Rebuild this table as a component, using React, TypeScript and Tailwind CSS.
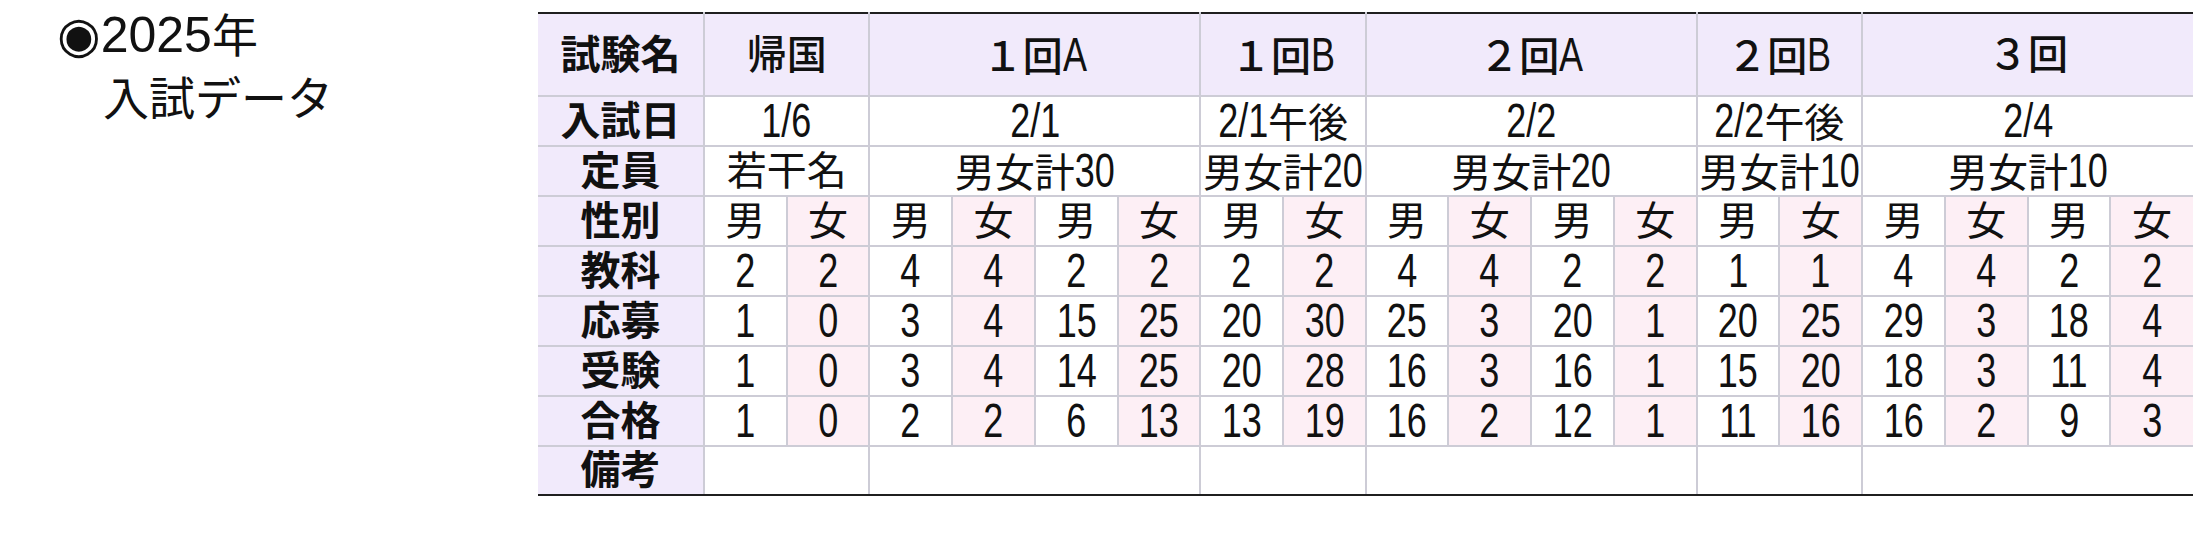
import React from "react";

const groups = [
  { name: "帰国", date: "1/6", cap: "若干名", span: 2 },
  { name: "１回A", date: "2/1", cap: "男女計30", span: 4 },
  { name: "１回B", date: "2/1午後", cap: "男女計20", span: 2 },
  { name: "２回A", date: "2/2", cap: "男女計20", span: 4 },
  { name: "２回B", date: "2/2午後", cap: "男女計10", span: 2 },
  { name: "３回", date: "2/4", cap: "男女計10", span: 4 },
];

const rows: { label: string; values: number[] }[] = [
  { label: "教科", values: [2, 2, 4, 4, 2, 2, 2, 2, 4, 4, 2, 2, 1, 1, 4, 4, 2, 2] },
  { label: "応募", values: [1, 0, 3, 4, 15, 25, 20, 30, 25, 3, 20, 1, 20, 25, 29, 3, 18, 4] },
  { label: "受験", values: [1, 0, 3, 4, 14, 25, 20, 28, 16, 3, 16, 1, 15, 20, 18, 3, 11, 4] },
  { label: "合格", values: [1, 0, 2, 2, 6, 13, 13, 19, 16, 2, 12, 1, 11, 16, 16, 2, 9, 3] },
];

const genders = Array.from({ length: 18 }, (_, i) => (i % 2 === 0 ? "男" : "女"));

// Liberation Sans advance widths (em) for the half-width characters used here
const ADV: Record<string, number> = { "/": 0.278, A: 0.667, B: 0.667 };
const NUM_SIZE = 48;
const NUM_SCALE = 0.75;

// half-width runs are drawn taller and squeezed, like the condensed numerals of the original
function Narrow({ text }: { text: string }) {
  const parts = text.match(/[\x20-\x7e]+|[^\x20-\x7e]+/g) ?? [];
  return (
    <>
      {parts.map((p, i) => {
        if (!/^[\x20-\x7e]/.test(p)) return <span key={i}>{p}</span>;
        const w = [...p].reduce((s, c) => s + (ADV[c] ?? 0.556), 0) * NUM_SIZE;
        const m = (-(1 - NUM_SCALE) * w) / 2;
        return (
          <span
            key={i}
            className="inline-block text-[48px] scale-x-[0.75]"
            style={{ marginLeft: m, marginRight: m }}
          >
            {p}
          </span>
        );
      })}
    </>
  );
}

const line = "border-2 border-[#cdccd6] whitespace-nowrap";
const labelCell = `${line} border-l-0 bg-[#f1eafb] font-bold`;
const pink = (i: number) => (i % 2 === 1 ? "bg-[#fdeff5]" : "");

export default function App() {
  return (
    <div
      className="flex w-[2210px] h-[560px] bg-white text-[#111]"
      style={{ fontFamily: '"Liberation Sans", "Noto Sans CJK JP", sans-serif' }}
    >
      <div className="w-[538px] shrink-0 pl-[57px] pt-[4px] text-[46px] leading-[63px]">
        <p>
          <span className="text-[50px]" style={{ fontFamily: '"DejaVu Sans", sans-serif' }}>
            ◉
          </span>
          <span className="text-[50px]">2025</span>年
        </p>
        <p className="pl-[46px]">入試データ</p>
      </div>

      <div className="pt-[12px]">
        <table className="w-[1655px] table-fixed border-collapse text-center text-[40px] leading-none">
          <colgroup>
            <col className="w-[166px]" />
            {genders.map((_, i) => (
              <col key={i} />
            ))}
          </colgroup>
          <tbody>
            <tr className="h-[83px] bg-[#f1eafb]">
              <td className={`${labelCell} border-t-[#1f1f1f]`}>試験名</td>
              {groups.map((g) => (
                <td
                  key={g.name}
                  colSpan={g.span}
                  className={`${line} border-t-[#1f1f1f] font-medium last:border-r-0`}
                >
                  <Narrow text={g.name} />
                </td>
              ))}
            </tr>
            <tr className="h-[49.5px]">
              <td className={labelCell}>入試日</td>
              {groups.map((g) => (
                <td key={g.name} colSpan={g.span} className={`${line} last:border-r-0`}>
                  <Narrow text={g.date} />
                </td>
              ))}
            </tr>
            <tr className="h-[49.5px]">
              <td className={labelCell}>定員</td>
              {groups.map((g) => (
                <td key={g.name} colSpan={g.span} className={`${line} last:border-r-0`}>
                  <Narrow text={g.cap} />
                </td>
              ))}
            </tr>
            <tr className="h-[49.5px]">
              <td className={labelCell}>性別</td>
              {genders.map((s, i) => (
                <td key={i} className={`${line} last:border-r-0 ${pink(i)}`}>
                  {s}
                </td>
              ))}
            </tr>
            {rows.map((r) => (
              <tr key={r.label} className="h-[49.5px]">
                <td className={labelCell}>{r.label}</td>
                {r.values.map((v, i) => (
                  <td key={i} className={`${line} last:border-r-0 ${pink(i)}`}>
                    <Narrow text={String(v)} />
                  </td>
                ))}
              </tr>
            ))}
            <tr className="h-[49.5px]">
              <td className={`${labelCell} border-b-[#1f1f1f]`}>備考</td>
              {groups.map((g) => (
                <td
                  key={g.name}
                  colSpan={g.span}
                  className={`${line} border-b-[#1f1f1f] last:border-r-0`}
                />
              ))}
            </tr>
          </tbody>
        </table>
      </div>
    </div>
  );
}
